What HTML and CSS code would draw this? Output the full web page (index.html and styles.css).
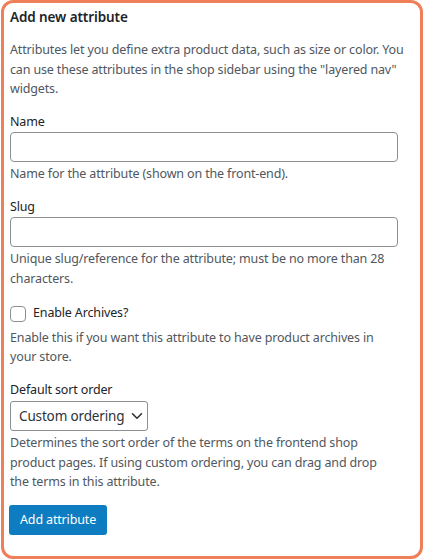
FILE: index.html
```html
<!DOCTYPE html>
<html>
<head>
<meta charset="utf-8">
<link rel="stylesheet" href="styles.css">
</head>
<body>
<div class="frame">
  <h2 class="title">Add new attribute</h2>
  <p class="desc intro">Attributes let you define extra product data, such as size or color. You can use these attributes in the shop sidebar using the "layered nav" widgets.</p>

  <label class="label" for="name">Name</label>
  <input class="field" id="name" type="text">
  <p class="desc tight">Name for the attribute (shown on the front-end).</p>

  <label class="label" for="slug">Slug</label>
  <input class="field" id="slug" type="text">
  <p class="desc tight">Unique slug/reference for the attribute; must be no more than 28 characters.</p>

  <div class="check-row">
    <span class="checkbox"></span>
    <span class="check-label">Enable Archives?</span>
  </div>
  <p class="desc after-check">Enable this if you want this attribute to have product archives in your store.</p>

  <label class="label" for="sort">Default sort order</label>
  <div class="select">
    <span>Custom ordering</span>
    <svg class="chev" width="12" height="8" viewBox="0 0 12 8"><path d="M1.5 1.8 L6 6.2 L10.5 1.8" fill="none" stroke="#2c3338" stroke-width="1.6" stroke-linecap="round" stroke-linejoin="round"/></svg>
  </div>
  <p class="desc tight">Determines the sort order of the terms on the frontend shop product pages. If using custom ordering, you can drag and drop the terms in this attribute.</p>

  <div class="button">Add attribute</div>
</div>
</body>
</html>
```

FILE: styles.css
```css
* { box-sizing: border-box; }
html, body { margin: 0; padding: 0; background: #ffffff; }
body {
  font-family: "Noto Sans", "Open Sans", sans-serif;
  font-size: 12.5px;
  letter-spacing: -0.15px;
  color: #1d2327;
}
.frame {
  margin: 0 0 0 1px;
  width: 422px;
  height: 559px;
  border: 3px solid #ef7f58;
  border-radius: 12px;
  padding: 4px 8px 0 6px;
}
.title {
  margin: 0;
  font-size: 13.5px;
  line-height: 20px;
  font-weight: 600;
  letter-spacing: -0.1px;
  color: #1d2327;
}
.desc {
  margin: 0;
  line-height: 19.5px;
  color: #50575e;
}
.intro { margin-top: 13px; }
.tight { margin-top: 2px; max-width: 388px; }
.after-check { margin-top: 5px; max-width: 388px; }
.label {
  display: block;
  margin-top: 13px;
  line-height: 19.5px;
  color: #1d2327;
}
.field {
  display: block;
  margin: 1px 0 0 0;
  width: 388px;
  height: 30px;
  border: 1px solid #8c8f94;
  border-radius: 4px;
  background: #fff;
  padding: 0 8px;
  font: inherit;
}
.check-row {
  margin-top: 15px;
  display: flex;
  align-items: center;
  height: 19.5px;
}
.checkbox {
  width: 16px;
  height: 16px;
  border: 1px solid #8c8f94;
  border-radius: 4px;
  margin-top: 2px;
}
.check-label {
  margin-left: 7px;
  color: #1d2327;
}
.select {
  margin-top: 2px;
  width: 138px;
  height: 30px;
  border: 1px solid #8c8f94;
  border-radius: 3px;
  display: flex;
  align-items: center;
  padding: 0 0 0 8px;
  color: #2c3338;
  font-size: 13.5px;
  white-space: nowrap;
}
.chev { margin-left: 7px; }
.button {
  margin-top: 13px;
  display: inline-flex;
  align-items: center;
  height: 30px;
  padding: 0 11px;
  background: #0e7cc1;
  border-radius: 3px;
  color: #ffffff;
  margin-left: -1px;
}
```
